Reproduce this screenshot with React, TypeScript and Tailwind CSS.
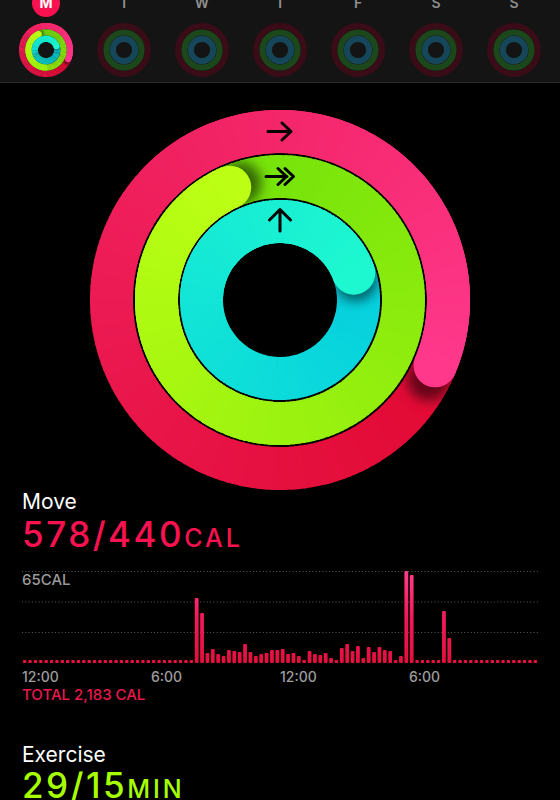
import React from "react";

type RGB = [number, number, number];
interface RingSpec {
  r: number;
  w: number;
  T: number;
  c0: RGB;
  c1: RGB;
  g: number;
}

const RINGS: RingSpec[] = [
  { r: 168.5, w: 43, T: 473, c0: [222, 4, 40], c1: [255, 56, 140], g: 1.5 },
  { r: 123.5, w: 43, T: 696, c0: [47, 199, 0], c1: [188, 255, 20], g: 1 },
  { r: 78.5, w: 43, T: 430, c0: [0, 198, 226], c1: [30, 248, 208], g: 1 },
];

const C = 190;

function pt(r: number, deg: number): [number, number] {
  const a = (deg * Math.PI) / 180;
  return [C + r * Math.sin(a), C - r * Math.cos(a)];
}

function arcPath(r: number, a1: number, a2: number) {
  const [x1, y1] = pt(r, a1);
  const [x2, y2] = pt(r, a2);
  const large = a2 - a1 > 180 ? 1 : 0;
  return `M${x1.toFixed(2)} ${y1.toFixed(2)}A${r} ${r} 0 ${large} 1 ${x2.toFixed(2)} ${y2.toFixed(2)}`;
}

function mix(c0: RGB, c1: RGB, t: number, g = 1) {
  const tt = Math.pow(Math.max(0, Math.min(1, t)), g);
  const c = c0.map((v, i) => Math.round(v + (c1[i] - v) * tt));
  return `rgb(${c[0]},${c[1]},${c[2]})`;
}

function annulus(ro: number, ri: number) {
  return `M${C - ro} ${C}a${ro} ${ro} 0 1 0 ${2 * ro} 0a${ro} ${ro} 0 1 0 ${-2 * ro} 0Z M${C - ri} ${C}a${ri} ${ri} 0 1 0 ${2 * ri} 0a${ri} ${ri} 0 1 0 ${-2 * ri} 0Z`;
}

function Ring({ spec, id }: { spec: RingSpec; id: string }) {
  const { r, w, T, c0, c1, g } = spec;
  const step = 2;
  const base: React.ReactNode[] = [];
  for (let a = 0; a < 360; a += step) {
    const mid = a + step / 2;
    const k = Math.floor((T - mid) / 360);
    const t = (mid + 360 * k) / T;
    base.push(
      <path key={"b" + a} d={arcPath(r, a, a + step + 0.6)} stroke={mix(c0, c1, t, g)} strokeWidth={w} fill="none" />
    );
  }
  const top: React.ReactNode[] = [];
  for (let a = T - 160; a < T; a += step) {
    const end = Math.min(a + step + 0.6, T);
    const t = (a + step / 2) / T;
    top.push(<path key={"t" + a} d={arcPath(r, a, end)} stroke={mix(c0, c1, t, g)} strokeWidth={w} fill="none" />);
  }
  const [ex, ey] = pt(r, T);
  const [sx, sy] = pt(r, T + 5);
  return (
    <g>
      <defs>
        <clipPath id={id + "-clip"}>
          <path d={annulus(r + w / 2, r - w / 2)} clipRule="evenodd" />
        </clipPath>
        <filter id={id + "-blur"} x="-50%" y="-50%" width="200%" height="200%">
          <feGaussianBlur stdDeviation="6" />
        </filter>
      </defs>
      {base}
      <g clipPath={`url(#${id}-clip)`}>
        <circle cx={sx} cy={sy} r={w / 2} fill="black" opacity={0.55} filter={`url(#${id}-blur)`} />
      </g>
      <circle cx={ex} cy={ey} r={w / 2} fill={mix(c0, c1, 1, g)} />
      {top}
    </g>
  );
}

function ActivityRings({ size, id, arrows }: { size: number; id: string; arrows?: boolean }) {
  return (
    <svg width={size} height={size} viewBox="0 0 380 380" className="block">
      {RINGS.map((s, i) => (
        <Ring key={i} spec={s} id={`${id}-${i}`} />
      ))}
      {arrows && (
        <g stroke="black" strokeWidth={3} strokeLinecap="round" strokeLinejoin="round" fill="none">
          <path d="M178 21.5H201M192 13L201 21.5L192 30" />
          <path d="M176 66.5H197M188 58.5L196.5 66.5L188 74.5M195 58.5L203.5 66.5L195 74.5" />
          <path d="M190 121V99.5M179.5 110L190 99.5L200.5 110" />
        </g>
      )}
    </svg>
  );
}

function DimRings() {
  return (
    <svg width={54} height={54} viewBox="0 0 380 380" className="block">
      <circle cx={C} cy={C} r={168.5} stroke="#3a0c17" strokeWidth={43} fill="none" />
      <circle cx={C} cy={C} r={123.5} stroke="#1b471a" strokeWidth={43} fill="none" />
      <circle cx={C} cy={C} r={78.5} stroke="#16465a" strokeWidth={43} fill="none" />
    </svg>
  );
}

const BARS: number[] = (() => {
  const h = new Array(96).fill(0);
  const vals: Record<number, number> = {
    32: 65, 33: 50, 34: 10, 35: 14, 36: 9, 37: 7, 38: 13, 39: 12, 40: 11, 41: 19, 42: 11, 43: 7,
    44: 9, 45: 10, 46: 13, 47: 13, 48: 14, 49: 9, 50: 10, 51: 7, 52: 3, 53: 12, 54: 9, 55: 8,
    56: 10, 57: 5, 58: 3, 59: 15, 60: 19, 61: 12, 62: 17, 63: 5, 64: 16, 65: 11, 66: 16, 67: 13,
    68: 12, 69: 3, 70: 7, 71: 92, 72: 88, 78: 52, 79: 25,
  };
  Object.entries(vals).forEach(([k, v]) => (h[Number(k)] = v));
  return h;
})();

function MoveChart() {
  const slot = 516 / 96;
  return (
    <div className="relative mt-[16px] h-[100px] w-[516px]">
      <svg width={516} height={100} viewBox="0 0 516 100" className="block">
        <defs>
          <linearGradient id="barGrad" gradientUnits="userSpaceOnUse" x1="0" y1="96" x2="0" y2="4">
            <stop offset="0" stopColor="#e2103c" />
            <stop offset="0.5" stopColor="#f3195a" />
            <stop offset="1" stopColor="#ff3d8c" />
          </linearGradient>
        </defs>
        {[4.5, 35, 65.5].map((y) => (
          <line key={y} x1={0} x2={516} y1={y} y2={y} stroke="#5c5c5c" strokeWidth={1} strokeDasharray="1 2.3" />
        ))}
        {BARS.map((h, i) => {
          const cx = slot * (i + 0.5);
          if (h === 0) {
            return <rect key={i} x={cx - 1.7} y={93} width={3.4} height={3} rx={0.8} fill="#e8123f" />;
          }
          return <rect key={i} x={cx - 1.9} y={96 - h} width={3.8} height={h} rx={1} fill="url(#barGrad)" />;
        })}
      </svg>
      <div className="absolute left-0 top-[4.5px] text-[15px] leading-[16px] font-medium text-[#9a9a9a]">65CAL</div>
    </div>
  );
}

export default function App() {
  const days = ["M", "T", "W", "T", "F", "S", "S"];
  return (
    <div className="w-full h-[800px] overflow-hidden bg-black font-[Inter,sans-serif]">
      <div className="h-[83px] bg-[#141414] border-b border-[#2b2b2b] grid grid-cols-7 px-[7px] overflow-hidden">
        {days.map((d, i) => (
          <div key={i} className="flex flex-col items-center">
            {i === 0 ? (
              <div className="-mt-[11px] h-7 w-7 rounded-full bg-[#fa114f] flex items-center justify-center text-[14px] font-bold leading-none text-white">
                {d}
              </div>
            ) : (
              <div className="-mt-[11px] h-7 w-7 flex items-center justify-center text-[14px] font-semibold leading-none text-[#8e8e8e]">
                {d}
              </div>
            )}
            <div className="mt-[6px] h-[54px] w-[54px]">
              {i === 0 ? <ActivityRings size={54} id="small" /> : <DimRings />}
            </div>
          </div>
        ))}
      </div>

      <div className="mt-[27px] flex justify-center">
        <ActivityRings size={380} id="big" arrows />
      </div>

      <div className="px-[22px]">
        <div className="mt-[2px] text-[21px] leading-[20px] text-white">Move</div>
        <div className="mt-[5px] flex h-[34px] items-baseline font-medium text-[#fa114f]">
          <span className="text-[35px] leading-[34px] tracking-[2.5px]">578/440</span>
          <span className="text-[25px] leading-[34px] tracking-[3px]">CAL</span>
        </div>

        <MoveChart />

        <div className="mt-[2px] grid w-[516px] grid-cols-4 text-[14px] leading-[16px] font-medium text-[#9d9d9d]">
          <div>12:00</div>
          <div>6:00</div>
          <div>12:00</div>
          <div>6:00</div>
        </div>
        <div className="mt-[2px] text-[15px] leading-[16px] font-medium text-[#e8184c]">TOTAL 2,183 CAL</div>

        <div className="mt-[42px] text-[21px] leading-[20px] text-white">Exercise</div>
        <div className="mt-[3px] flex h-[34px] items-baseline font-medium text-[#a6ff00]">
          <span className="text-[35px] leading-[34px] tracking-[2.5px]">29/15</span>
          <span className="text-[25px] leading-[34px] tracking-[3px]">MIN</span>
        </div>
      </div>
    </div>
  );
}
